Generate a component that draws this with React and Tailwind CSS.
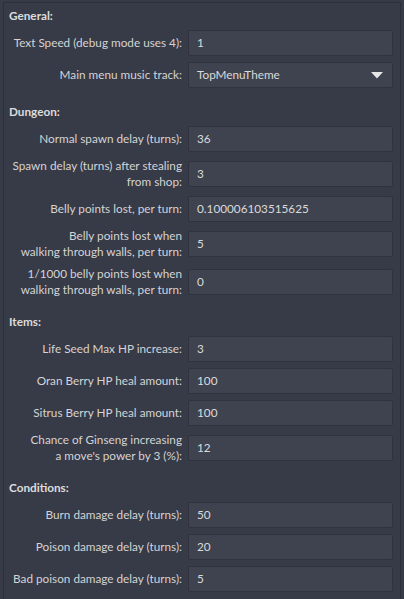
import React from "react";

const sections = [
  {
    title: "General:",
    rows: [
      { label: ["Text Speed (debug mode uses 4):"], value: "1" },
      { label: ["Main menu music track:"], value: "TopMenuTheme", select: true },
    ],
  },
  {
    title: "Dungeon:",
    rows: [
      { label: ["Normal spawn delay (turns):"], value: "36" },
      { label: ["Spawn delay (turns) after stealing", "from shop:"], value: "3" },
      { label: ["Belly points lost, per turn:"], value: "0.100006103515625" },
      { label: ["Belly points lost when", "walking through walls, per turn:"], value: "5" },
      { label: ["1/1000 belly points lost when", "walking through walls, per turn:"], value: "0" },
    ],
  },
  {
    title: "Items:",
    rows: [
      { label: ["Life Seed Max HP increase:"], value: "3" },
      { label: ["Oran Berry HP heal amount:"], value: "100" },
      { label: ["Sitrus Berry HP heal amount:"], value: "100" },
      { label: ["Chance of Ginseng increasing", "a move's power by 3 (%):"], value: "12" },
    ],
  },
  {
    title: "Conditions:",
    rows: [
      { label: ["Burn damage delay (turns):"], value: "50" },
      { label: ["Poison damage delay (turns):"], value: "20" },
      { label: ["Bad poison damage delay (turns):"], value: "5" },
    ],
  },
];

function Row({ row }) {
  const two = row.label.length > 1;
  return (
    <div className={`flex items-center ${two ? "h-[32px]" : "h-[26px]"}`}>
      <div className="w-[178px] shrink-0 text-right leading-[16px]">
        {row.label.map((l, i) => (
          <div key={i} className="whitespace-nowrap">{l}</div>
        ))}
      </div>
      <div className="ml-[6px] w-[205px] h-[26px] shrink-0 flex items-center justify-between rounded-[2px] border border-[#30333d] bg-[#3f4350] pl-[8px] pr-[9px] text-[#dadada]">
        <span>{row.value}</span>
        {row.select && (
          <svg width="12" height="7" viewBox="0 0 12 7">
            <path d="M0 0 L12 0 L6 6.5 Z" fill="#e6e6e6" />
          </svg>
        )}
      </div>
    </div>
  );
}

export default function App() {
  return (
    <div
      className="w-[404px] h-[599px] overflow-hidden bg-[#373a47] text-[11.75px] text-[#d4d4d4]"
      style={{ fontFamily: "Lato, 'Noto Sans', sans-serif" }}
    >
      <div className="mx-[3px] mt-[2px] h-[597px] border-l border-r border-t border-[#2d303a] pt-[5px] flex flex-col gap-[16px]">
        {sections.map((s) => (
          <div key={s.title} className="flex flex-col">
            <div className="h-[16px] leading-[16px] pl-[5px] font-bold text-[#dcdcdc]">{s.title}</div>
            <div className="mt-[6px] flex flex-col gap-[6px]">
              {s.rows.map((r, i) => (
                <Row key={i} row={r} />
              ))}
            </div>
          </div>
        ))}
      </div>
    </div>
  );
}
